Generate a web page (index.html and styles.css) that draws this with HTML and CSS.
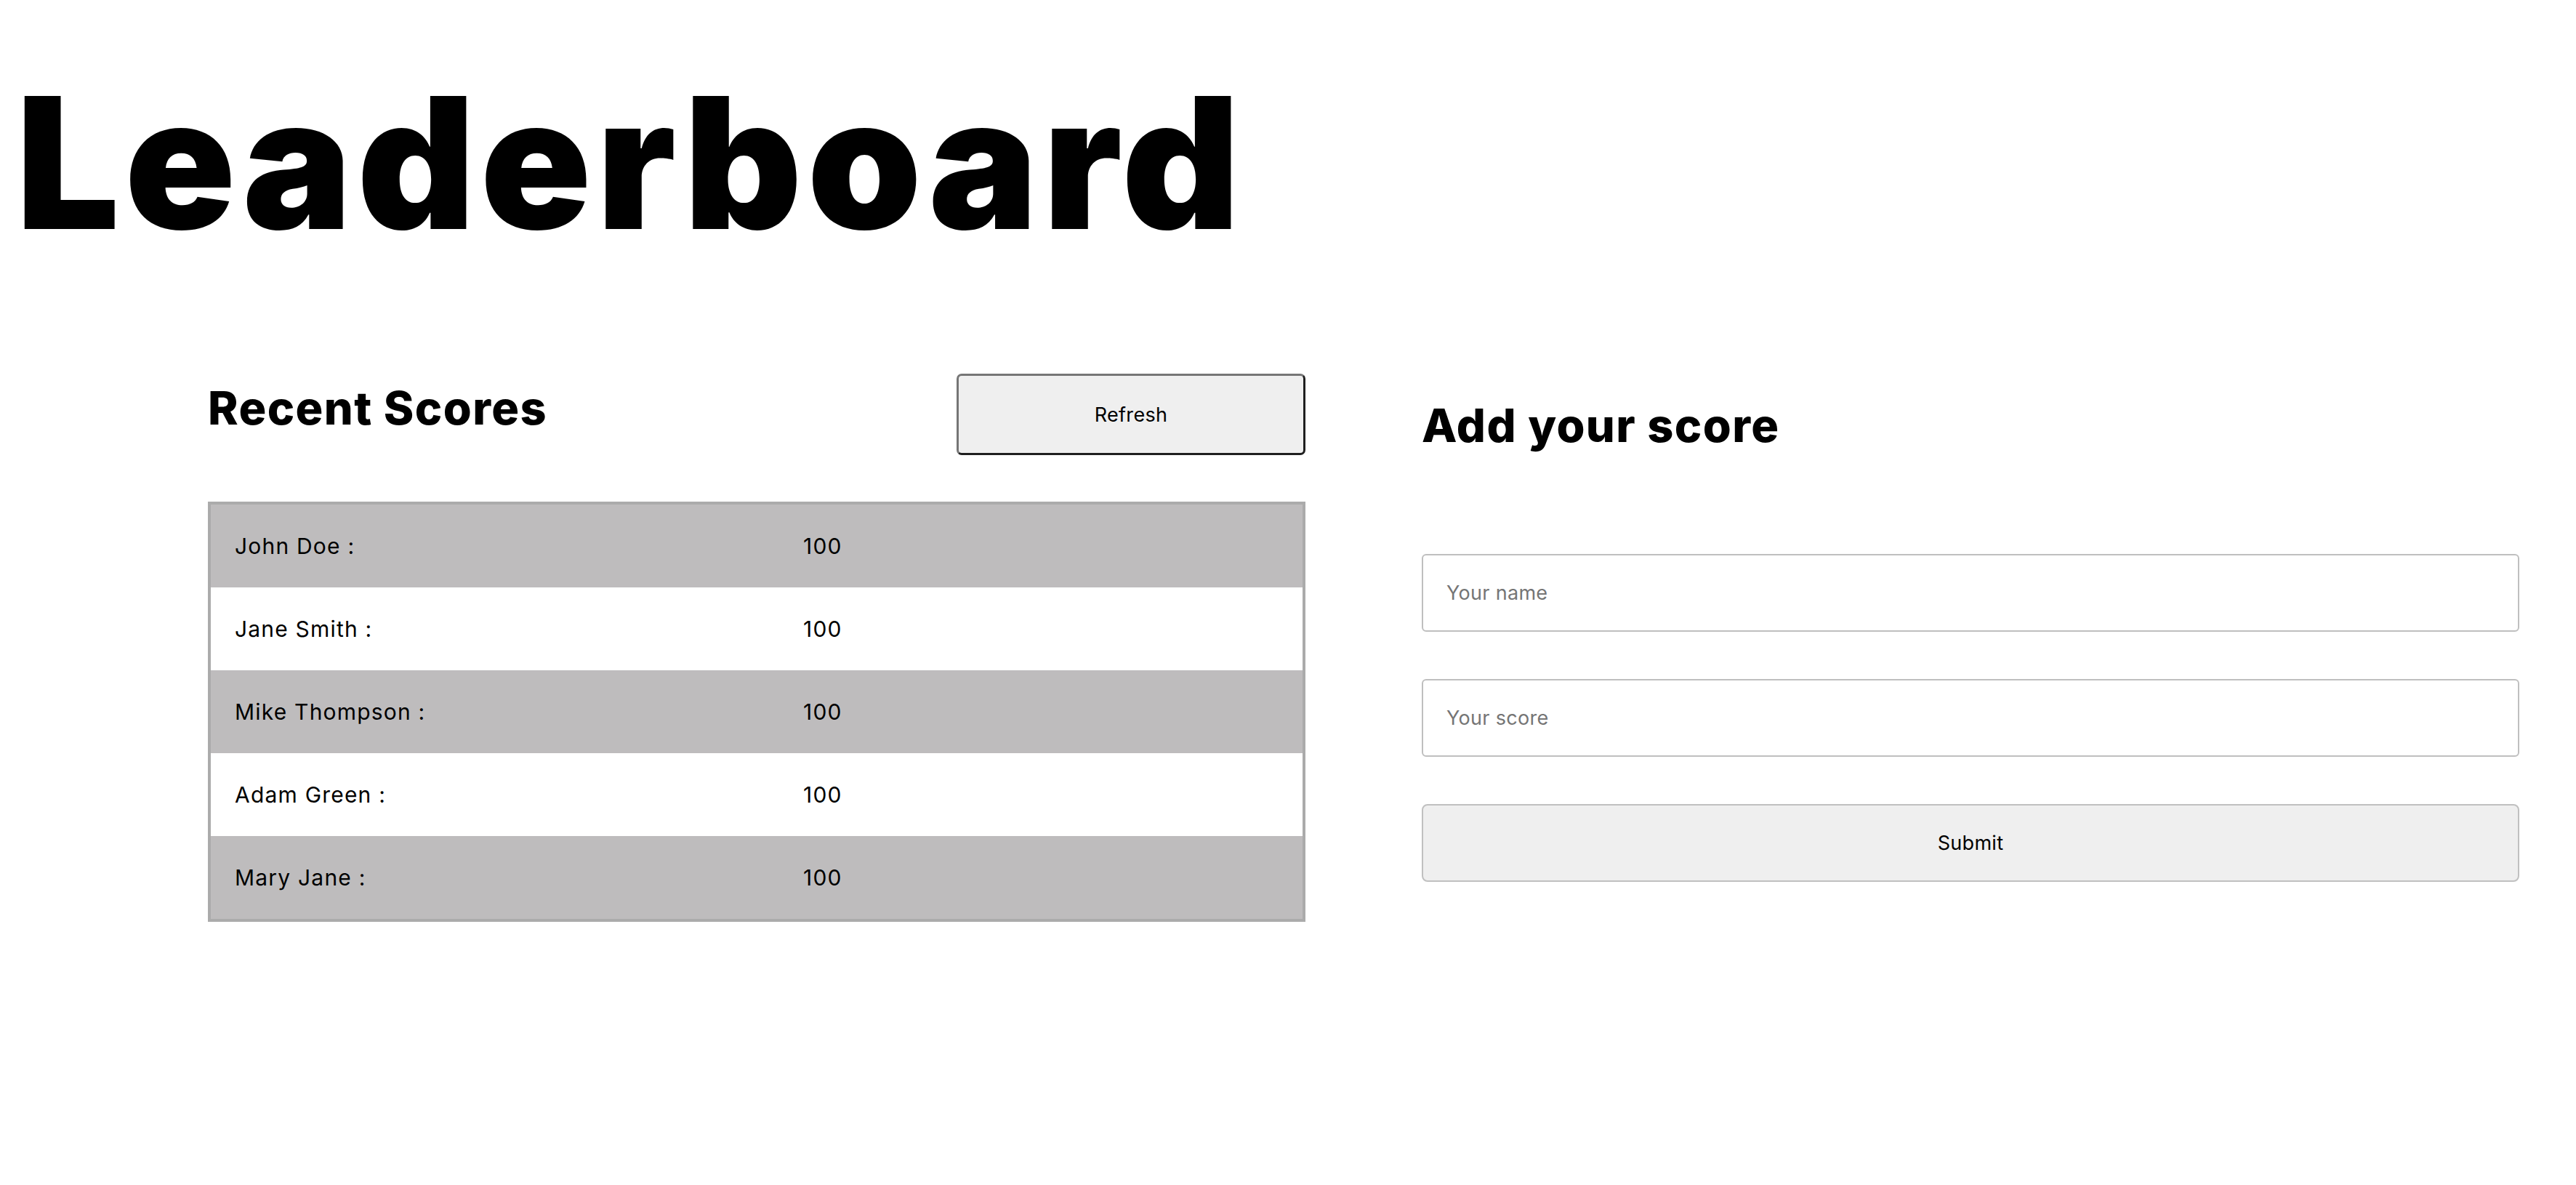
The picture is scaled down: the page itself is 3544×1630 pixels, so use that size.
FILE: index.html
```html
<!DOCTYPE html>
<html lang="en">
<head>
<meta charset="utf-8">
<title>Leaderboard</title>
<link rel="stylesheet" href="styles.css">
</head>
<body>
<h1 class="title">Leaderboard</h1>
<main class="columns">
  <section class="scores">
    <div class="scores-head">
      <h2 class="heading">Recent Scores</h2>
      <button class="refresh" type="button">Refresh</button>
    </div>
    <table class="board">
      <tbody>
        <tr><td class="name">John Doe :</td><td class="score">100</td></tr>
        <tr><td class="name">Jane Smith :</td><td class="score">100</td></tr>
        <tr><td class="name">Mike Thompson :</td><td class="score">100</td></tr>
        <tr><td class="name">Adam Green :</td><td class="score">100</td></tr>
        <tr><td class="name">Mary Jane :</td><td class="score">100</td></tr>
      </tbody>
    </table>
  </section>
  <section class="add">
    <h2 class="heading heading-add">Add your score</h2>
    <form class="add-form">
      <input class="field" type="text" placeholder="Your name">
      <input class="field" type="text" placeholder="Your score">
      <button class="submit" type="button">Submit</button>
    </form>
  </section>
</main>
</body>
</html>
```
FILE: styles.css
```css
* { box-sizing: border-box; }
html, body { margin: 0; padding: 0; background: #fff; }
body {
  font-family: Inter, "Noto Sans", sans-serif;
  color: #000;
}
.title {
  margin: 99px 0 0 0;
  padding-left: 22px;
  font-size: 252px;
  line-height: 250px;
  font-weight: 900;
  letter-spacing: 7px;
  height: 250px;
}
.columns {
  display: flex;
  gap: 160px;
  padding-left: 286px;
  margin-top: 165px;
}
.scores, .add { width: 1510px; flex: none; }
.scores-head {
  display: flex;
  justify-content: space-between;
  align-items: flex-start;
  height: 112px;
}
.heading {
  margin: 0;
  font-size: 63px;
  line-height: 61px;
  font-weight: 800;
  letter-spacing: 1.4px;
}
.scores-head .heading { margin-top: 17px; }
.refresh {
  width: 480px;
  height: 112px;
  background: #efefef;
  border: 3px solid;
  border-color: #767676 #1f1f1f #1f1f1f #767676;
  border-radius: 7px;
  font-family: inherit;
  font-size: 27px;
  letter-spacing: 0.3px;
  color: #000;
}
.board {
  margin-top: 64px;
  width: 1510px;
  border: 4px solid #ababab;
  border-collapse: separate;
  border-spacing: 0;
  font-size: 30px;
  letter-spacing: 1.2px;
}
.board tr { height: 114px; }
.board tr:nth-child(odd) td { background: #bebcbd; }
.board tr:nth-child(even) td { background: #fff; }
.board td { padding: 0 33px; vertical-align: middle; }
.board td.name { width: 782px; }
.heading-add { margin-top: 41px; }
.add-form {
  display: flex;
  flex-direction: column;
  gap: 65px;
  margin-top: 146px;
}
.field {
  height: 107px;
  width: 100%;
  border: 2px solid #bfbfbf;
  border-radius: 6px;
  padding: 0 32px;
  font-family: inherit;
  font-size: 27px;
  letter-spacing: 0.3px;
  color: #000;
  background: #fff;
}
.field::placeholder { color: #757575; }
.submit {
  height: 107px;
  width: 100%;
  border: 2px solid #c0c0c0;
  border-radius: 8px;
  background: #efefef;
  font-family: inherit;
  font-size: 27px;
  letter-spacing: 0.3px;
  color: #000;
}
```
